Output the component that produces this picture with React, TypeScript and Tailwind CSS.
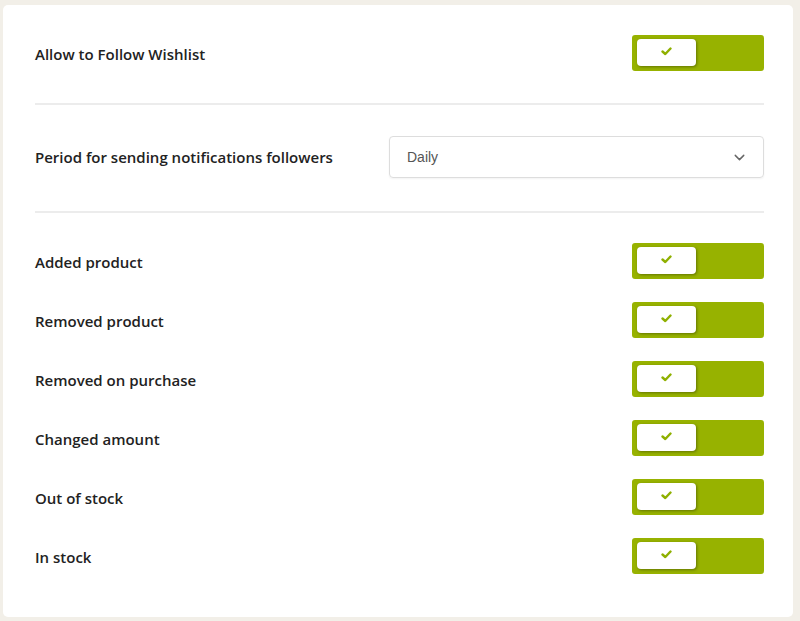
import React from 'react';
import { ChevronDown } from 'lucide-react';

function Toggle() {
    return (
        <div className="w-[132px] h-[36px] rounded-[3px] bg-[#97b200] pt-[4px] pl-[5px] flex items-start">
            <div className="w-[59px] h-[27px] rounded-[4px] bg-white shadow-[1px_1px_3px_rgba(0,0,0,0.35)] flex items-center justify-center">
                <svg width="11" height="9" viewBox="0 0 11 9" className="mb-[2px]">
                    <path d="M1.5 4.5 L4.3 7 L9.5 1.5" fill="none" stroke="#8fb000" strokeWidth="2.4" strokeLinecap="round" strokeLinejoin="round" />
                </svg>
            </div>
        </div>
    );
}

const notifications = [
    'Added product',
    'Removed product',
    'Removed on purchase',
    'Changed amount',
    'Out of stock',
    'In stock',
];

export default function App() {
    return (
        <div className="w-[800px] h-[621px] bg-[#f2efe8] pt-[5px] pl-[3px] pr-[7px] pb-[4px] font-['Open_Sans',sans-serif]">
            <div className="h-full bg-white rounded-[5px] pt-[30px] pl-[32px] pr-[29px]">
                <div className="h-[36px] flex items-center justify-between">
                    <span className="mt-[2px] text-[15px] font-semibold text-[#222]">Allow to Follow Wishlist</span>
                    <Toggle />
                </div>
                <hr className="mt-[32px] mb-[31px] border-0 h-[2px] bg-[#ececec]" />
                <div className="h-[42px] flex items-center justify-between">
                    <span className="text-[15px] font-semibold text-[#222]">Period for sending notifications followers</span>
                    <div className="w-[375px] h-[42px] rounded-[4px] border border-[#dddddd] shadow-[0_1px_2px_rgba(0,0,0,0.05)] flex items-center justify-between pl-[17px] pr-[15px]">
                        <span className="text-[14px] text-[#555] font-['Liberation_Sans',Arial,sans-serif]">Daily</span>
                        <ChevronDown size={17} strokeWidth={2} className="text-[#666]" />
                    </div>
                </div>
                <hr className="mt-[33px] mb-[30px] border-0 h-[2px] bg-[#ececec]" />
                <div className="flex flex-col gap-[23px]">
                    {notifications.map((label) => (
                        <div key={label} className="h-[36px] flex items-center justify-between">
                            <span className="mt-[2px] text-[15px] font-semibold text-[#222]">{label}</span>
                            <Toggle />
                        </div>
                    ))}
                </div>
            </div>
        </div>
    );
}
